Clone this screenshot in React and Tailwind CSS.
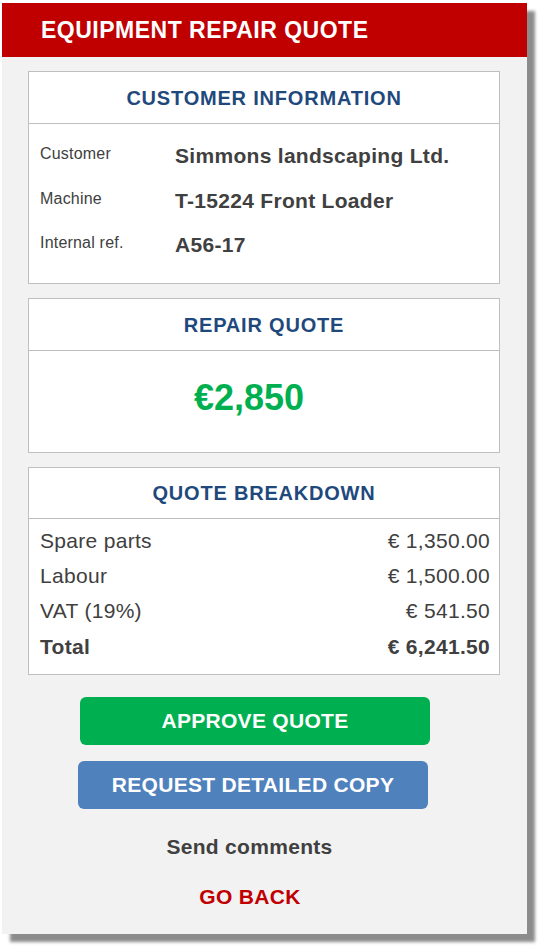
export default function App() {
  const font = { fontFamily: '"Liberation Sans", Arial, sans-serif' };

  const details = [
    ["Customer", "Simmons landscaping Ltd."],
    ["Machine", "T-15224 Front Loader"],
    ["Internal ref.", "A56-17"],
  ];

  const breakdown = [
    ["Spare parts", "€ 1,350.00"],
    ["Labour", "€ 1,500.00"],
    ["VAT (19%)", "€ 541.50"],
  ];

  return (
    <div className="min-h-screen bg-white pt-[3px] pl-[2px]" style={font}>
      <div className="w-[525px] h-[931px] bg-[#f2f2f2] shadow-[8px_8px_3px_rgba(0,0,0,0.45)] flex flex-col">
        {/* header */}
        <div className="h-[54px] bg-[#c00000] flex items-center pl-[39px]">
          <h1 className="text-white font-bold text-[23px] tracking-[0.5px]">
            EQUIPMENT REPAIR QUOTE
          </h1>
        </div>

        <div className="flex flex-col pl-[26px] pr-[27px] pt-[14px] gap-[14px]">
          {/* customer info */}
          <div className="bg-white border border-[#bfbfbf]">
            <div className="h-[52px] border-b border-[#bfbfbf] flex items-center justify-center">
              <h2 className="text-[#1f497d] font-bold text-[20px] tracking-[0.8px]">CUSTOMER INFORMATION</h2>
            </div>
            <div className="h-[159px] pl-[11px] pt-[20px] flex flex-col gap-[20.5px]">
              {details.map(([label, value]) => (
                <div key={label} className="flex items-center h-[24px]">
                  <span className="w-[135px] text-[16px] tracking-[0.2px] text-[#404040] -mt-[4px]">{label}</span>
                  <span className="text-[21px] font-bold tracking-[0.3px] text-[#404040]">{value}</span>
                </div>
              ))}
            </div>
          </div>

          {/* repair quote */}
          <div className="bg-white border border-[#bfbfbf]">
            <div className="h-[52px] border-b border-[#bfbfbf] flex items-center justify-center">
              <h2 className="text-[#1f497d] font-bold text-[20px] tracking-[0.8px]">REPAIR QUOTE</h2>
            </div>
            <div className="h-[101px] flex items-center justify-center pr-[30px] pb-[8px]">
              <span className="text-[#00b050] font-bold text-[36px]">€2,850</span>
            </div>
          </div>

          {/* breakdown */}
          <div className="bg-white border border-[#bfbfbf]">
            <div className="h-[51px] border-b border-[#bfbfbf] flex items-center justify-center">
              <h2 className="text-[#1f497d] font-bold text-[20px] tracking-[0.8px]">QUOTE BREAKDOWN</h2>
            </div>
            <div className="h-[155px] pl-[11px] pr-[9px] pt-[4px] flex flex-col text-[21px] tracking-[0.3px] text-[#404040]">
              {breakdown.map(([label, value]) => (
                <div key={label} className="flex justify-between h-[35px] items-center">
                  <span>{label}</span>
                  <span>{value}</span>
                </div>
              ))}
              <div className="flex justify-between h-[37px] items-center font-bold">
                <span>Total</span>
                <span>€ 6,241.50</span>
              </div>
            </div>
          </div>
        </div>

        {/* actions */}
        <div className="flex flex-col items-center pt-[22px]">
          <button className="w-[350px] h-[48px] mr-[19px] rounded-[6px] bg-[#00b050] text-white font-bold text-[21px] tracking-[0.3px]">
            APPROVE QUOTE
          </button>
          <button className="w-[350px] h-[48px] mt-[16px] mr-[23px] rounded-[6px] bg-[#4f81bd] text-white font-bold text-[21px] tracking-[0.3px]">
            REQUEST DETAILED COPY
          </button>
          <span className="mt-[22px] mr-[30px] text-[21px] font-bold tracking-[0.3px] text-[#404040]">Send comments</span>
          <span className="mt-[18px] mr-[29px] text-[21px] font-bold tracking-[0.3px] text-[#c00000]">GO BACK</span>
        </div>
      </div>
    </div>
  );
}
